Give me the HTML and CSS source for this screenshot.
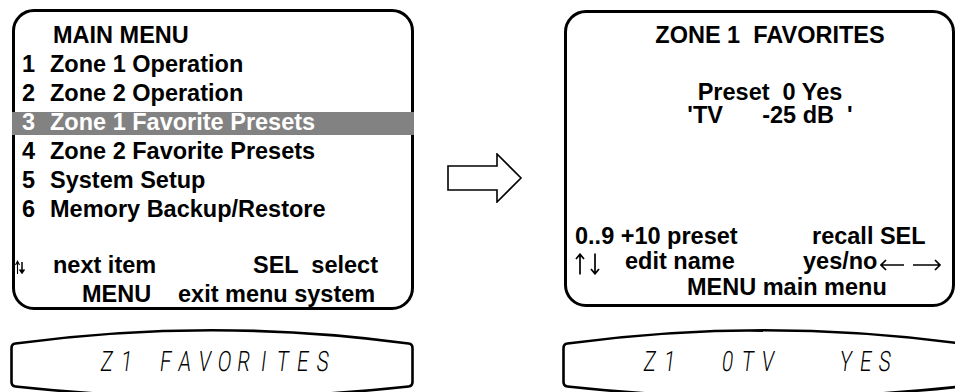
FILE: index.html
```html
<!DOCTYPE html>
<html lang="en">
<head>
    <meta charset="UTF-8">
    <meta name="viewport" content="width=device-width, initial-scale=1.0">
    <title>Zone 1 Favorites</title>
    <link rel="stylesheet" href="styles.css">
</head>
<body>
    <div class="diagram">

        <!-- On-screen menu -->
        <div class="screen screen-menu">
            <div class="title">MAIN MENU</div>
            <ul class="menu">
                <li><span class="num">1</span>Zone 1 Operation</li>
                <li><span class="num">2</span>Zone 2 Operation</li>
                <li class="selected"><span class="num">3</span>Zone 1 Favorite Presets</li>
                <li><span class="num">4</span>Zone 2 Favorite Presets</li>
                <li><span class="num">5</span>System Setup</li>
                <li><span class="num">6</span>Memory Backup/Restore</li>
            </ul>
            <div class="hints">
                <div class="hint-row">
                    <span class="keys-icon"><svg width="10" height="15" viewBox="0 0 10 15"><path d="M2.5 14V1.5M0.5 5L2.5 1.2L4.5 5" fill="none" stroke="#000" stroke-width="1.1"/><path d="M7 2V10.5" stroke="#000" stroke-width="1.5"/><path d="M3.6 9.5H10.4L7 14.2Z" fill="#000"/></svg></span>
                    <span class="w-next">next item</span>
                    <span class="pre">SEL  select</span>
                </div>
                <div class="hint-row row-exit">
                    <span class="w-menu">MENU</span>
                    <span>exit menu system</span>
                </div>
            </div>
        </div>

        <!-- Flow arrow -->
        <div class="flow-arrow">
            <svg width="76" height="50" viewBox="0 0 76 50">
                <path d="M1 13H50V1L74 25L50 49V37H1Z" fill="#fff" stroke="#000" stroke-width="1.6" stroke-linejoin="miter"/>
            </svg>
        </div>

        <!-- Favorites screen -->
        <div class="screen screen-fav">
            <div class="title centered pre">ZONE 1  FAVORITES</div>
            <div class="preset centered">
                <div class="pre">Preset  0 Yes</div>
                <div class="pre">'TV      -25 dB  '</div>
            </div>
            <div class="fav-hints">
                <div class="hint-row">
                    <span class="w-preset">0..9 +10 preset</span>
                    <span>recall SEL</span>
                </div>
                <div class="hint-row">
                    <span class="w-ud"><svg class="ud-icon" width="26" height="22" viewBox="0 0 26 22"><path d="M5 21.5V1.5M1 6L5 1.2L9 6M20 0.5V20.5M16 16L20 20.8L24 16" fill="none" stroke="#000" stroke-width="1.7"/></svg></span>
                    <span class="w-edit">edit name</span>
                    <span>yes/no</span>
                    <svg class="lr-icon" width="62" height="12" viewBox="0 0 62 12"><path d="M1 6H24M6 1L1 6L6 11M33 6H60M55 1L60 6L55 11" fill="none" stroke="#000" stroke-width="1.7"/></svg>
                </div>
                <div class="hint-row row-main">MENU main menu</div>
            </div>
        </div>

        <!-- Front panel displays -->
        <div class="lcd lcd-left">
            <svg class="lcd-frame" width="404" height="66" viewBox="0 0 404 66">
                <path d="M5.5 17.5Q202 -9 398.5 17.5Q402.5 18 402.5 22V56Q402.5 60 398.5 60.5Q202 82 5.5 60.5Q1.5 60 1.5 56V22Q1.5 18 5.5 17.5Z" fill="none" stroke="#000" stroke-width="2.6"/>
            </svg>
            <div class="lcd-text"><span class="cell">Z</span><span class="cell">1</span><span class="cell"> </span><span class="cell">F</span><span class="cell">A</span><span class="cell">V</span><span class="cell">O</span><span class="cell">R</span><span class="cell">I</span><span class="cell">T</span><span class="cell">E</span><span class="cell">S</span></div>
        </div>
        <div></div>
        <div class="lcd lcd-right">
            <svg class="lcd-frame" width="404" height="66" viewBox="0 0 404 66">
                <path d="M5.5 17.5Q202 -9 398.5 17.5Q402.5 18 402.5 22V56Q402.5 60 398.5 60.5Q202 82 5.5 60.5Q1.5 60 1.5 56V22Q1.5 18 5.5 17.5Z" fill="none" stroke="#000" stroke-width="2.6"/>
            </svg>
            <div class="lcd-text"><span class="cell">Z</span><span class="cell">1</span><span class="cell"> </span><span class="cell"> </span><span class="cell">0</span><span class="cell">T</span><span class="cell">V</span><span class="cell"> </span><span class="cell"> </span><span class="cell"> </span><span class="cell">Y</span><span class="cell">E</span><span class="cell">S</span></div>
        </div>
    </div>
</body>
</html>
```

FILE: styles.css
```css
html, body {
    margin: 0;
    overflow: hidden;
    background: #fff;
}
body {
    font-family: "Liberation Sans", Arial, sans-serif;
    font-weight: bold;
    font-size: 23.5px;
    color: #000;
}
.diagram {
    display: grid;
    grid-template-columns: 402px 150px 391px;
    row-gap: 16px;
    padding: 9px 0 0 12px;
}
.pre {
    white-space: pre;
}
.screen {
    box-sizing: border-box;
    border: 3px solid #000;
    border-radius: 22px;
}
.title {
    line-height: 29px;
}
.centered {
    text-align: center;
    padding-left: 21px;
}

/* main menu */
.screen-menu {
    height: 301px;
    padding-top: 9px;
}
.screen-menu .title {
    padding-left: 38px;
}
.menu {
    list-style: none;
    margin: 0;
    padding: 0;
}
.menu li {
    display: flex;
    line-height: 29px;
    padding-left: 7px;
}
.menu .num {
    width: 28px;
}
.menu .selected {
    color: #fff;
    margin-left: -3px;
    margin-right: -3px;
    padding-left: 10px;
    background: linear-gradient(to bottom, transparent 4px, #828282 4px, #828282 27px, transparent 27px);
}
.hints {
    margin-top: 27px;
}
.hint-row {
    display: flex;
    align-items: baseline;
    line-height: 29px;
}
.keys-icon {
    width: 38px;
}
.keys-icon svg {
    vertical-align: -2px;
}
.w-next {
    width: 200px;
}
.row-exit {
    padding-left: 67px;
}
.w-menu {
    width: 96px;
}

/* arrow between screens */
.flow-arrow {
    padding: 144px 0 0 33px;
}

/* favorites screen */
.screen-fav {
    height: 297px;
    margin-top: 1px;
    padding-top: 8px;
}
.preset {
    margin-top: 31px;
    line-height: 23px;
}
.fav-hints {
    margin-top: 97px;
}
.fav-hints .hint-row {
    line-height: 25px;
    padding-left: 8px;
}
.w-preset {
    width: 237px;
}
.w-ud {
    width: 50px;
}
.ud-icon {
    vertical-align: -6px;
}
.w-edit {
    width: 178px;
}
.lr-icon {
    margin-left: 3px;
    align-self: flex-end;
    margin-bottom: 4px;
}
.fav-hints .row-main {
    padding-left: 120px;
}

/* front panel lcd */
.lcd {
    position: relative;
    height: 66px;
    margin-left: -2px;
}
.lcd-right {
    width: 406px;
}
.lcd-frame {
    position: absolute;
    left: 0;
    top: 0;
    overflow: visible;
}
.lcd-text {
    position: relative;
    display: flex;
    padding-top: 22px;
    padding-left: 87px;
}
.lcd-right .lcd-text {
    padding-left: 78px;
}
.cell {
    display: inline-block;
    width: 19.6px;
    text-align: center;
    white-space: pre;
    font-family: Roboto, "Noto Sans", sans-serif;
    font-weight: 300;
    font-size: 28px;
    line-height: 28px;
    transform: skewX(-7deg) scaleX(0.72);
}
```
